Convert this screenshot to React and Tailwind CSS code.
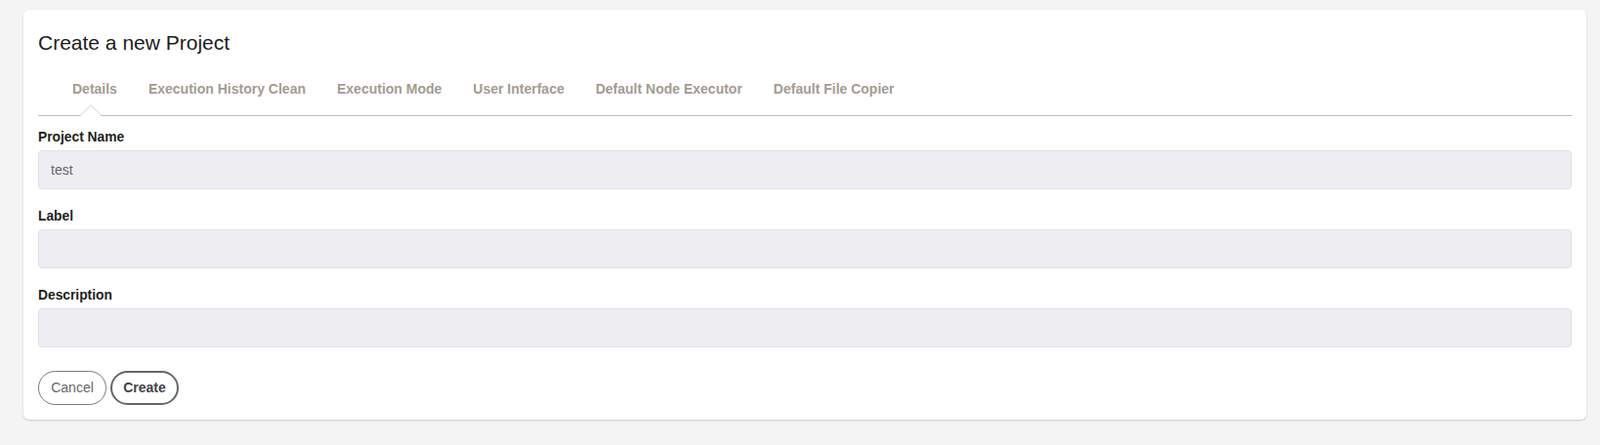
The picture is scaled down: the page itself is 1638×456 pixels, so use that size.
import React, { useState } from 'react';

const tabs = [
    'Details',
    'Execution History Clean',
    'Execution Mode',
    'User Interface',
    'Default Node Executor',
    'Default File Copier',
];

function Field({ label, value, className = '' }) {
    return (
        <div className={className}>
            <label className="block text-[13.8px] leading-4 font-bold text-[#231f1c]">{label}</label>
            <input
                defaultValue={value}
                className="mt-[5px] block w-full h-[40px] rounded-[4px] border border-[#e1e1e6] bg-[#eeeef2] px-3 text-[14px] text-[#666] outline-none"
            />
        </div>
    );
}

export default function App() {
    const [active, setActive] = useState(0);

    return (
        <div className="min-h-[456px] bg-[#f4f4f4] pt-[10px] pl-[24px] pr-[14px] font-['Liberation_Sans',Arial,sans-serif]">
            <div className="bg-white rounded-[6px] shadow-[0_1px_2px_rgba(0,0,0,0.18)] px-[15px] pt-[22px] pb-[15px]">
                <h1 className="text-[21px] leading-6 text-[#1c1c1c]">Create a new Project</h1>

                {/* tabs */}
                <div className="mt-[27px] flex border-b border-[#bdbdbd] pl-[19px]">
                    {tabs.map((t, i) => (
                        <button
                            key={t}
                            onClick={() => setActive(i)}
                            className="relative px-4 pb-[19px] text-[14px] leading-4 font-bold text-[#a39b92] whitespace-nowrap"
                        >
                            {t}
                            {active === i && (
                                <svg
                                    className="absolute left-[24px] bottom-[-1px]"
                                    width="22"
                                    height="12"
                                    viewBox="0 0 22 12"
                                >
                                    <path d="M0 11.5 L11 0.7 L22 11.5" fill="#fff" stroke="#cfcfcf" strokeWidth="1" />
                                    <rect x="1" y="11" width="20" height="1" fill="#fff" />
                                </svg>
                            )}
                        </button>
                    ))}
                </div>

                <Field label="Project Name" value="test" className="mt-[14px]" />
                <Field label="Label" value="" className="mt-[20px]" />
                <Field label="Description" value="" className="mt-[20px]" />

                <div className="mt-[24px] flex gap-[4px]">
                    <button className="h-[35px] w-[70px] rounded-full border border-[#7a7a7a] text-[14px] text-[#666]">
                        Cancel
                    </button>
                    <button className="h-[35px] w-[70px] rounded-full border-2 border-[#666] text-[14px] font-bold text-[#444]">
                        Create
                    </button>
                </div>
            </div>
        </div>
    );
}
